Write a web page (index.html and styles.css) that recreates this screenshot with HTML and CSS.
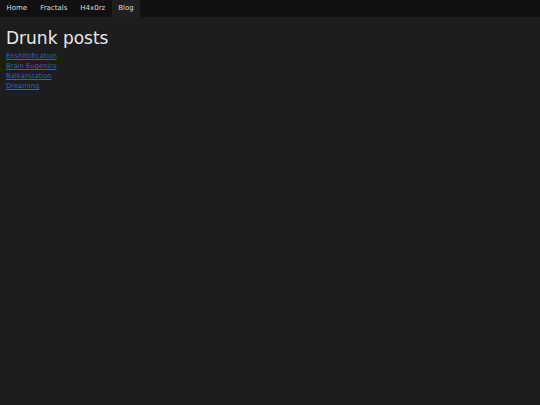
FILE: index.html
```html
<!DOCTYPE html>
<html>
<head>
<meta charset="utf-8">
<link rel="stylesheet" href="styles.css">
</head>
<body>
<nav class="topnav">
  <a href="#">Home</a>
  <a href="#">Fractals</a>
  <a href="#">H4x0rz</a>
  <a href="#" class="active">Blog</a>
</nav>
<main class="content">
  <h1>Drunk posts</h1>
  <ul class="posts">
    <li><a href="#">Enshittification</a></li>
    <li><a href="#">Brain Eugenics</a></li>
    <li><a href="#">Balkanization</a></li>
    <li><a href="#">Dreaming</a></li>
  </ul>
</main>
</body>
</html>
```
FILE: styles.css
```css
html, body {
  margin: 0;
  padding: 0;
  background: #1d1d1d;
  color: #e0e0e0;
  font-family: "DejaVu Sans", Verdana, sans-serif;
  height: 100%;
}
.topnav {
  display: flex;
  background: #111111;
  height: 17px;
}
.topnav a {
  display: block;
  padding: 0 6.5px;
  line-height: 17px;
  font-size: 7px;
  color: #dcdcdc;
  text-decoration: none;
}
.topnav a.active {
  background: #1f1f1f;
}
.content {
  padding: 0 6px;
}
h1 {
  margin: 10px 0 2px;
  font-size: 17px;
  font-weight: normal;
  line-height: 22px;
  color: #e8e8e8;
}
.posts {
  list-style: none;
  margin: 0;
  padding: 0;
}
.posts li {
  font-size: 6.8px;
  line-height: 10px;
}
.posts a {
  color: #2f63c0;
}
```
